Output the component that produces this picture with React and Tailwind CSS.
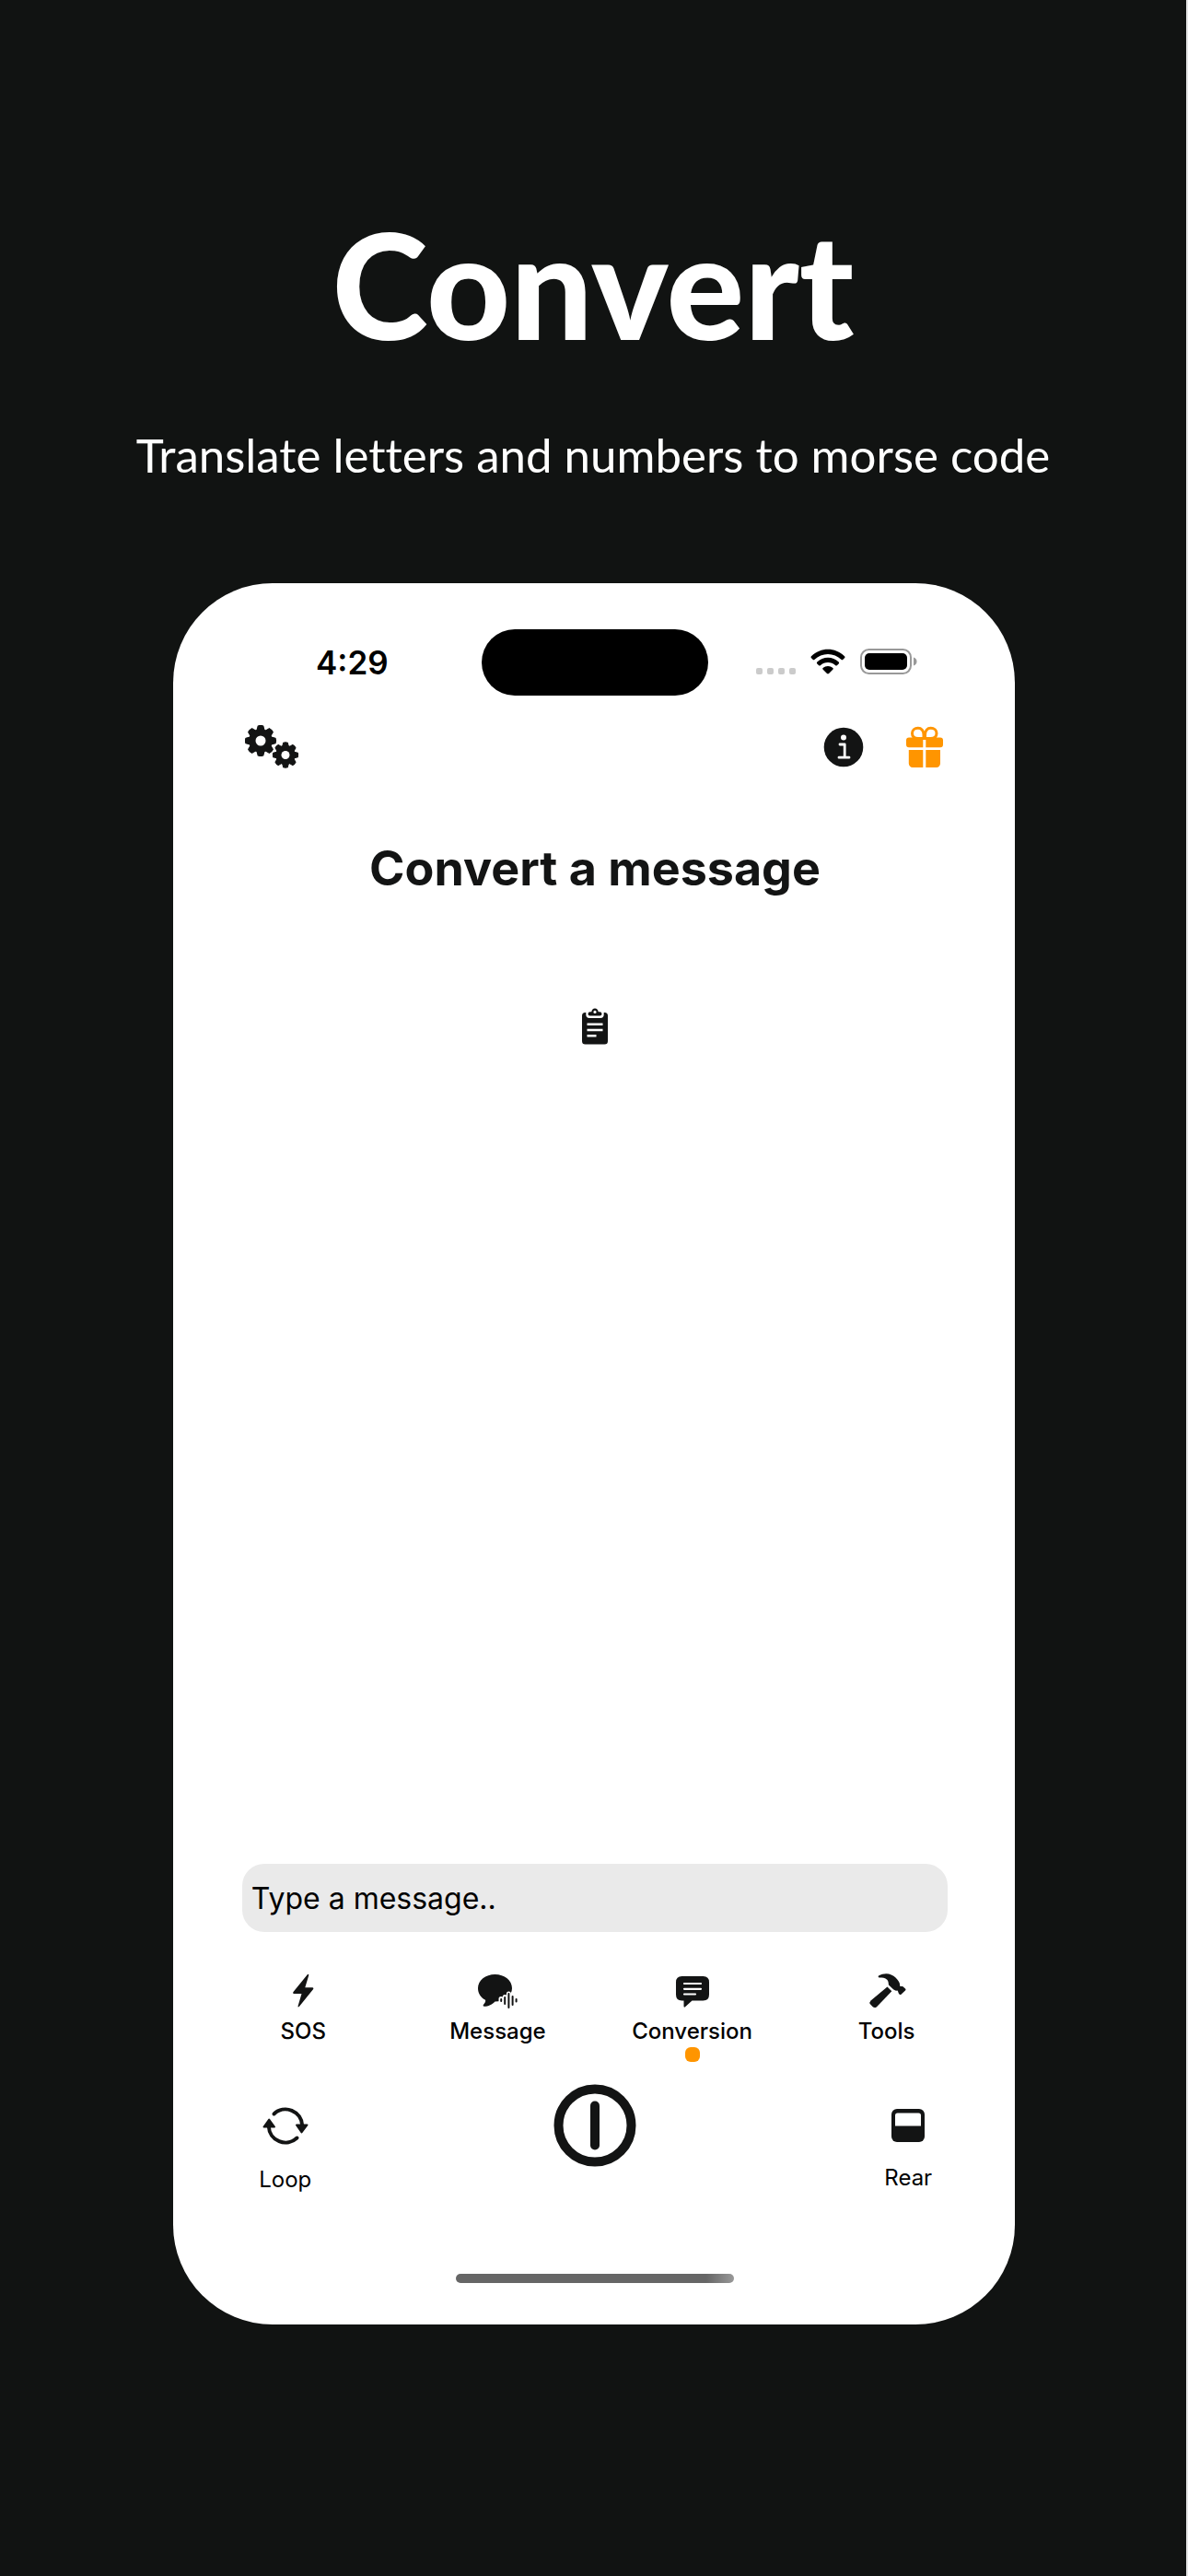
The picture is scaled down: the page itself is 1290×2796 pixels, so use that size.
const ink = "#131414";

function Gear({ cx, cy, r, hole }) {
  const teeth = [0, 45, 90, 135, 180, 225, 270, 315];
  return (
    <g>
      {teeth.map((a) => (
        <path
          key={a}
          transform={`translate(${cx} ${cy}) rotate(${a})`}
          d={`M${-r * 0.3} ${-r * 0.5}L${-r * 0.17} ${-r}Q0 ${-r * 1.06} ${r * 0.17} ${-r}L${r * 0.3} ${-r * 0.5}Z`}
          strokeWidth={r * 0.08}
          stroke={ink}
          strokeLinejoin="round"
        />
      ))}
      <circle cx={cx} cy={cy} r={r * 0.8} />
      <circle cx={cx} cy={cy} r={hole} fill="#fff" />
    </g>
  );
}

function GearsIcon() {
  return (
    <svg viewBox="0 0 60 48" className="h-12 w-[60px]" fill={ink} aria-hidden="true">
      <Gear cx={17} cy={17} r={16} hole={5.5} />
      <Gear cx={44} cy={32.5} r={13.3} hole={4.5} />
    </svg>
  );
}

function InfoIcon() {
  return (
    <svg viewBox="0 0 44 44" className="size-11" aria-hidden="true">
      <circle cx="22" cy="22" r="21.3" fill={ink} />
      <circle cx="22" cy="11.6" r="3" fill="#fff" />
      <path d="M18 19h5.2v14.2M17 33.2h11" fill="none" stroke="#fff" strokeWidth="2.8" strokeLinecap="round" strokeLinejoin="round" />
    </svg>
  );
}

function GiftIcon() {
  return (
    <svg viewBox="0 0 44 46" className="h-[46px] w-11" fill="#ff9500" aria-hidden="true">
      <g fill="none" stroke="#ff9500" strokeWidth="3">
        <path d="M21 13.5V9.500C21 5 18.500 2.300 14.800 2.300C11.200 2.300 8.500 4.800 8.500 8C8.500 11.500 11 13.500 15 13.500Z" />
        <path d="M22.500 13.500V9.500C22.500 5 25 2.300 28.700 2.300C32.300 2.300 35 4.800 35 8C35 11.500 32.500 13.500 28.500 13.500Z" />
      </g>
      <path d="M5 12.500H20.300V23.300H5A3 3 0 0 1 2 20.300V15.500A3 3 0 0 1 5 12.500ZM23.300 12.500H39A3 3 0 0 1 42 15.500V20.300A3 3 0 0 1 39 23.300H23.300Z" />
      <path d="M4.800 26H20.300V45H9A4.200 4.200 0 0 1 4.800 40.800ZM23.300 26H39V40.800A4.200 4.200 0 0 1 34.800 45H23.300Z" />
    </svg>
  );
}

function WifiIcon() {
  return (
    <svg viewBox="0 0 38 28" className="h-7 w-[38px]" fill="#000" aria-hidden="true">
      <path d="M1 8.300C11 -1.700 27 -1.700 37 8.300Q38 9.300 37 10.300L35.200 12Q34.500 12.600 33.700 11.900C25.500 3.900 12.500 3.900 4.300 11.900Q3.500 12.600 2.800 12L1 10.300Q0 9.300 1 8.300Z" />
      <path d="M7.300 14.500C13.700 8.200 24.300 8.200 30.700 14.500Q31.600 15.500 30.700 16.400L28.800 18.200Q28 18.900 27.200 18.200C22.600 14 15.400 14 10.800 18.200Q10 18.900 9.200 18.200L7.300 16.400Q6.400 15.500 7.300 14.500Z" />
      <path d="M13.600 20.900C16.500 18.200 21.500 18.200 24.400 20.900Q25.200 21.700 24.500 22.400L20 27Q19 27.900 18 27L13.500 22.400Q12.800 21.700 13.600 20.900Z" />
    </svg>
  );
}

function BatteryIcon() {
  return (
    <svg viewBox="0 0 62 28" className="h-7 w-[62px]" aria-hidden="true">
      <rect x="1" y="1" width="54" height="26" rx="8.500" fill="#fff" stroke="#999" strokeWidth="2" />
      <rect x="5" y="5" width="46" height="18" rx="5" fill="#000" />
      <path d="M58 9.500Q61.500 10.800 61.500 14Q61.500 17.200 58 18.500Z" fill="#999" />
    </svg>
  );
}

function ClipboardIcon() {
  return (
    <svg viewBox="0 0 28 40" className="h-10 w-7" fill={ink} aria-hidden="true">
      <path d="M3.500 5H4.300V7Q4.300 11 8 11H20Q23.700 11 23.700 7V5H24.500Q28 5 28 8.500V36Q28 39.500 24.500 39.500H3.500Q0 39.500 0 36V8.500Q0 5 3.500 5Z" />
      <path fillRule="evenodd" d="M8.500 8.500Q6.500 8.500 6.500 6.500Q6.500 4.200 9 4.200H10.300Q11 .5 14 .5Q17 .5 17.700 4.200H19Q21.500 4.200 21.500 6.500Q21.500 8.500 19.500 8.500ZM14 2.800A1.600 1.600 0 1 0 14 6A1.600 1.600 0 1 0 14 2.800Z" />
      <path d="M5.500 17.700H22.500M5.500 24H22.500M5.500 30.300H15.500" stroke="#fff" strokeWidth="2.600" />
    </svg>
  );
}

function BoltIcon() {
  return (
    <svg viewBox="0 0 40 40" className="size-10" fill={ink} aria-hidden="true">
      <path d="M24.800 2.200Q26.600 1.200 26.200 3.200L22.300 16.300H30.500Q32.200 16.700 31 18.300L16 36.800Q14.300 38.300 14.600 36.200L18.500 23H10Q8.300 22.500 9.500 21Z" />
    </svg>
  );
}

function MessageIcon() {
  return (
    <svg viewBox="0 0 44 40" className="h-10 w-11" aria-hidden="true">
      <path fill={ink} d="M19.500 2C29.800 2 38 8.600 38 17C38 25.400 29.800 31.500 19.500 31.500C17 34.500 11.500 37 7.500 36.800C6 36.500 6.600 35 7.800 33.800C9 32.400 9.500 30.800 9 29.800C4 27.200 1 22.700 1 17C1 8.600 9.200 2 19.500 2Z" />
      <path d="M26 28.500V32M30.200 26.500V35M34.400 23V37.500M38.600 25.500V35M42.800 28V32" stroke="#fff" strokeWidth="5" strokeLinecap="round" />
      <path d="M26.200 29V31M30.200 27V34M34.400 23V38M38.600 26V35M42.600 29V31.500" stroke={ink} strokeWidth="2" strokeLinecap="round" />
    </svg>
  );
}

function ConversionIcon() {
  return (
    <svg viewBox="0 0 40 40" className="size-10" aria-hidden="true">
      <path fill={ink} d="M8.500 4H31.500Q38 4 38 10.500V24Q38 30.500 31.500 30.500H19.500L12 37.300Q10.500 38.300 10.500 36.500V30.500H8.500Q2 30.500 2 24V10.500Q2 4 8.500 4Z" />
      <path d="M11 12H29M11 17.800H29M11 23.500H23" fill="none" stroke="#fff" strokeWidth="2.200" strokeLinecap="round" />
    </svg>
  );
}

function HammerIcon() {
  return (
    <svg viewBox="0 0 44 40" className="h-10 w-11" fill={ink} aria-hidden="true">
      <path d="M13 3.500C20 -.5 27 1 31.500 5.500C35 9 36.500 11.500 36 14.500C37.500 15.300 38.500 14.800 39.500 15.200L42 17.500Q43 18.500 42 19.500L37.500 23.800Q36.500 24.500 35.500 23.500C34.500 22.500 34.500 21 33.500 19.500C31.500 20 30 19.200 28.500 17.800L24 13.500C23.500 11.500 24 10 22.500 8C20 5.500 17 5.500 14 5.500Q12 5 13 3.500Z" />
      <path d="M22.500 15.500L27.300 20.300L11 37.200Q8.700 39 6.500 37L4.200 34.500Q2.500 32.500 4.500 30.500Z" />
    </svg>
  );
}

function LoopIcon() {
  return (
    <svg viewBox="0 0 50 44" className="h-11 w-[50px]" aria-hidden="true">
      <g fill="none" stroke={ink} strokeWidth="4" strokeLinecap="round">
        <path d="M12.500 8.500A18.200 18.200 0 0 1 43.200 21" />
        <path d="M37.500 34.500A18.200 18.200 0 0 1 6.800 22" />
      </g>
      <g fill={ink} stroke={ink} strokeWidth="2" strokeLinejoin="round">
        <path d="M37 20.500H48.500L42.500 28.500Z" />
        <path d="M1.500 22.500H13L7.200 14.500Z" />
      </g>
    </svg>
  );
}

function PowerIcon() {
  return (
    <svg viewBox="0 0 90 90" className="size-[90px]" fill="none" stroke={ink} strokeWidth="10" strokeLinecap="round" aria-hidden="true">
      <circle cx="45" cy="45" r="39.500" />
      <path d="M45 23.500V66.500" />
    </svg>
  );
}

function RearIcon() {
  return (
    <svg viewBox="0 0 38 38" className="size-[38px]" aria-hidden="true">
      <rect x="1" y="1" width="36" height="36" rx="6" fill={ink} />
      <path d="M5 8Q5 5.500 7.500 5.500H30.500Q33 5.500 33 8V19.500H5Z" fill="#fff" />
    </svg>
  );
}

const tabs = [
  { label: "SOS", Icon: BoltIcon },
  { label: "Message", Icon: MessageIcon },
  { label: "Conversion", Icon: ConversionIcon, active: true },
  { label: "Tools", Icon: HammerIcon },
];

export default function App() {
  return (
    <main className="flex min-h-screen flex-col items-center border-r-2 border-[#e5e5e5] bg-[#111312] font-[Inter,sans-serif] text-[#131414]">
      <h1 className="mt-[218px] text-center font-[Lato,sans-serif] text-[158px] leading-[180px] font-black text-white">Convert</h1>
      <p className="mt-[64px] text-center font-[Lato,sans-serif] text-[51px] leading-[64px] font-normal text-white [font-variant-ligatures:none]">
        Translate letters and numbers to morse code
      </p>
      <section className="mt-[107px] ml-[2px] flex min-h-[1890px] w-[71%] flex-col rounded-[108px] bg-white pl-[2px]">
        <header className="mt-[50px] grid h-[72px] grid-cols-[1fr_246px_1fr] items-center">
          <time className="pl-[52px] text-center text-[35px] leading-[72px] font-semibold text-black">4:29</time>
          <div className="h-[72px] rounded-full bg-black" />
          <div className="flex items-center justify-end gap-4 pr-[106px] pb-[2px]">
            <div className="flex gap-[5px] pt-5">
              {[0, 1, 2, 3].map((n) => (
                <span key={n} className="size-[7px] rounded-xs bg-[#cbcbcb]" />
              ))}
            </div>
            <WifiIcon />
            <BatteryIcon />
          </div>
        </header>
        <nav aria-label="Settings" className="mt-8 flex items-center justify-between px-[76px]">
          <button aria-label="Settings"><GearsIcon /></button>
          <div className="flex items-center gap-11">
            <button aria-label="Information"><InfoIcon /></button>
            <button aria-label="Gift"><GiftIcon /></button>
          </div>
        </nav>
        <h2 className="mt-[76px] text-center text-[52px] leading-[64px] font-bold">Convert a message</h2>
        <button aria-label="Paste" className="mx-auto mt-[119px]"><ClipboardIcon /></button>
        <div className="mt-auto px-[73px]">
          <input
            aria-label="Message"
            placeholder="Type a message.."
            className="block h-[74px] w-full rounded-3xl bg-[#eaeaea] px-[10px] text-[32px] leading-10 text-black placeholder:text-black"
          />
        </div>
        <nav aria-label="Modes" className="mt-[44px] grid grid-cols-4 px-[34px]">
          {tabs.map(({ label, Icon, active }) => (
            <button key={label} className="flex flex-col items-center text-2xl leading-8 font-medium text-black">
              <Icon />
              <span className="mt-2">{label}</span>
              <span className={active ? "mt-px size-4 rounded-md bg-[#ff9500]" : "mt-px size-4"} />
            </button>
          ))}
        </nav>
        <div className="mt-6 grid grid-cols-[1fr_90px_1fr] items-start">
          <button className="ml-20 flex w-20 flex-col items-center gap-5 pt-6 text-2xl leading-8 text-black">
            <LoopIcon />
            Loop
          </button>
          <button aria-label="Power"><PowerIcon /></button>
          <button className="mr-[76px] flex w-20 flex-col items-center gap-[22px] justify-self-end pt-[26px] text-2xl leading-8 text-black">
            <RearIcon />
            Rear
          </button>
        </div>
        <div className="mx-auto mt-[86px] mb-[45px] h-[10px] w-[302px] rounded-full bg-gradient-to-r from-[#666] via-[#666] via-90% to-[#999]" />
      </section>
    </main>
  );
}
